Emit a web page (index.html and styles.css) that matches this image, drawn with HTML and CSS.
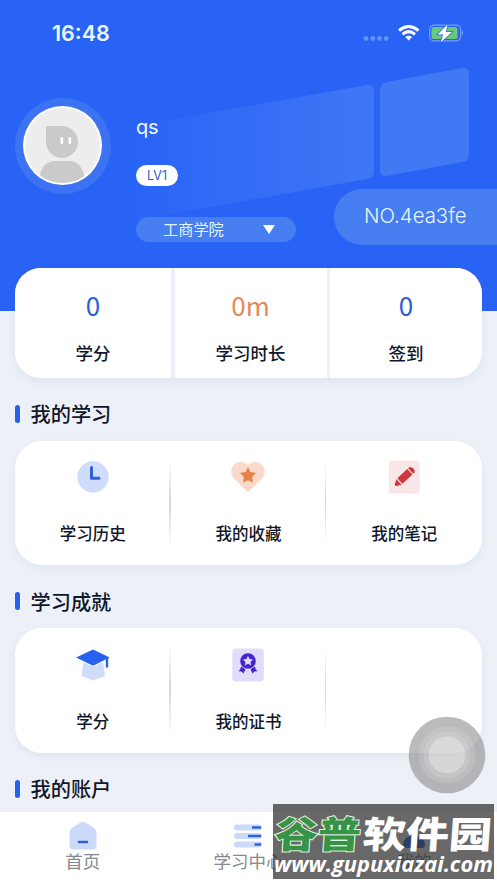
FILE: index.html
```html
<!DOCTYPE html>
<html lang="zh-CN">
<head>
<meta charset="utf-8">
<meta name="viewport" content="width=device-width, initial-scale=1">
<title>我的</title>
<link rel="stylesheet" href="styles.css">
</head>
<body>
<div class="app">
  <header class="hero">
    <svg class="hero-art" viewBox="0 0 497 311" aria-hidden="true">
      <defs>
        <linearGradient id="fade"><stop offset="0" stop-color="#447cf5" stop-opacity="0"/><stop offset="1" stop-color="#447cf5" stop-opacity=".8"/></linearGradient>
      </defs>
      <path fill="url(#fade)" d="M126 128 L367 85 Q374 84 374 91 V171 Q374 178 367 179 L126 222Z"/>
      <path fill="#447cf5" opacity=".88" d="M387 82 L462 68 Q469 67 469 74 V154 Q469 161 462 162 L387 176 Q380 177 380 170 V90 Q380 83 387 82Z"/>
    </svg>
    <div class="status">
      <span class="time">16:48</span>
      <svg class="status-icons" viewBox="0 0 104 24" aria-hidden="true">
        <g fill="#6790fa"><circle cx="6" cy="17.500" r="2.400"/><circle cx="12.800" cy="17.500" r="2.400"/><circle cx="19.500" cy="17.500" r="2.400"/><circle cx="26.200" cy="17.500" r="2.400"/></g>
        <g fill="none" stroke="#fff" stroke-width="3"><path d="M39 9.500Q48.700 1.500 58.500 9.500"/><path d="M42.500 13.300Q48.700 8 55 13.300"/></g>
        <path fill="#fff" d="M45.300 16Q48.700 13.400 52.100 16L48.700 19.400Z"/>
        <rect x="69.700" y="4.200" width="31" height="15.600" rx="4.500" fill="none" stroke="#7ca0fa" stroke-width="1.200"/>
        <rect x="71.500" y="6" width="26" height="12" rx="2.500" fill="#65cb78"/>
        <path d="M102 9.500v5q2-2.500 0-5" fill="#7ca0fa"/>
        <path d="M87.500 3.500L77.500 13.600h5.600L80.800 21.200 92 11h-6Z" fill="#fff" stroke="#2a63f4" stroke-width="1.500" paint-order="stroke"/>
      </svg>
    </div>
    <div class="profile">
      <div class="avatar">
        <svg viewBox="0 0 80 80" aria-hidden="true">
          <defs><clipPath id="face"><circle cx="39.500" cy="39.500" r="37.500"/></clipPath></defs>
          <circle cx="39.500" cy="39.500" r="39.500" fill="#fff"/><circle cx="39.500" cy="39.500" r="37.500" fill="#ededed"/>
          <g clip-path="url(#face)" fill="#cacaca"><path d="M23 20H39A16 16 0 1 1 23 36Z"/><path d="M17 80V69Q20 55 32 55H48Q58 56 61 69V80Z"/></g>
          <g fill="#fff"><rect x="37.500" y="31" width="2.600" height="7" rx="1"/><rect x="45.500" y="31" width="2.600" height="7" rx="1"/></g>
        </svg>
      </div>
      <div class="identity">
        <div class="name">qs</div>
        <span class="level">LV1</span>
        <div class="school"><span>工商学院</span><svg viewBox="0 0 12 9"><path d="M0 0H12L6 9Z" fill="#fff"/></svg></div>
      </div>
    </div>
    <div class="member">NO.4ea3fe</div>
  </header>

  <main>
    <section class="stats">
      <div class="stat"><b>0</b><span>学分</span></div>
      <div class="stat"><b class="orange">0m</b><span>学习时长</span></div>
      <div class="stat"><b>0</b><span>签到</span></div>
    </section>

    <h2>我的学习</h2>
    <section class="card">
      <div class="item">
        <svg viewBox="0 0 36 36"><circle cx="18" cy="18" r="15.700" fill="#cfdcfa"/><path d="M16.500 8.500V19.200H24" fill="none" stroke="#2c5fdc" stroke-width="3" stroke-linecap="round" stroke-linejoin="round"/></svg>
        <span>学习历史</span>
      </div>
      <div class="item">
        <svg viewBox="0 0 36 36"><path d="M18 33.500L3.500 19C-3.500 10 7-3 18 6C29-3 39.500 10 32.500 19Z" fill="#f9dac8"/><path d="M18 8.200L20.500 13L26 14L22.200 18L22.900 23.500L18 21.200L13.100 23.500L13.800 18L10 14L15.500 13Z" fill="#e6834b"/></svg>
        <span>我的收藏</span>
      </div>
      <div class="item">
        <svg viewBox="0 0 36 36"><rect x="2.700" y="1.500" width="31" height="33" rx="3.500" fill="#f9e6e6"/><g transform="translate(18.300 18) rotate(47)" fill="#cf373d"><path d="M-3.800-8.800V-9.800Q-3.500-12.300 0-12.300Q3.500-12.300 3.800-9.800V-8.800Z"/><path d="M-3.800-7.600H3.800V6H-3.800Z"/><path d="M-3.800 7.200H3.800L1.200 12Q0 13.500-1.200 12Z"/></g></svg>
        <span>我的笔记</span>
      </div>
    </section>

    <h2>学习成就</h2>
    <section class="card">
      <div class="item">
        <svg viewBox="0 0 36 36"><path d="M8.300 15.500H28L30 29L18 33.500L6.500 29Z" fill="#cfdcfa"/><path d="M18 2.500L34.700 10.500L18 18.700L1 10.500Z" fill="#2861ee" stroke="#fff" stroke-width="2" paint-order="stroke"/><path d="M32 11V20.500" stroke="#2861ee" stroke-width="2.400"/></svg>
        <span>学分</span>
      </div>
      <div class="item">
        <svg viewBox="0 0 36 36"><rect x="2.300" y="1.500" width="31.500" height="33" rx="3.500" fill="#e1dcfc"/><path d="M11 19.500L15.500 22.300L13.500 26.500L11.500 24.500L8.500 24.300L10.200 22.500ZM25 19.500L20.500 22.300L22.500 26.500L24.500 24.500L27.500 24.300L25.800 22.500Z" fill="#4325cb"/><circle cx="18" cy="14" r="7.800" fill="#4325cb"/><path d="M18 8.800L19.500 12L23 12.400L20.500 14.900L21.200 18.400L18 16.700L14.800 18.400L15.500 14.900L13 12.400L16.500 12Z" fill="#e1dcfc"/></svg>
        <span>我的证书</span>
      </div>
      <div class="item"></div>
    </section>

    <h2>我的账户</h2>
  </main>

  <nav class="tabs">
    <div class="tab"><svg viewBox="0 0 32 28"><path d="M13 .8Q16-1 19 .8L27 6Q29.500 8 29.500 10V23.500Q29.500 27.500 26 27.500H6Q2.500 27.500 2.500 23.500V10Q2.500 8 5 6Z" fill="#ccdafa"/><path d="M12 20H20" stroke="#2f62d2" stroke-width="2.500" stroke-linecap="round"/></svg><span>首页</span></div>
    <div class="tab"><svg viewBox="0 0 32 28"><path d="M5 5.500H27M5 14H27M5 22.500H27" stroke="#ccdafa" stroke-width="6" stroke-linecap="round"/><path d="M20 5.500H29M16 14H29M22.500 22.500H29" stroke="#2e62dc" stroke-width="2.400"/></svg><span>学习中心</span></div>
    <div class="tab"><svg viewBox="0 0 32 28"><circle cx="16" cy="8" r="7" fill="#ccdafa"/><path d="M5 23Q5 14 16 14T27 23Q27 26 24 26H8Q5 26 5 23Z" fill="#2861ee"/></svg><span>我的</span></div>
  </nav>

  <svg class="assistive" viewBox="0 0 78 78" aria-hidden="true">
    <circle cx="39" cy="39" r="38.300" fill="#777" fill-opacity=".5"/><circle cx="39" cy="39" r="28.500" fill="#fff" fill-opacity=".12"/><circle cx="39" cy="39" r="23.500" fill="#fff" fill-opacity=".12"/><circle cx="39" cy="39" r="18.500" fill="#fff" fill-opacity=".3"/>
  </svg>
  <div class="watermark">
    <svg viewBox="0 0 221 75">
      <g class="brand" font-size="37" transform="translate(3 0) skewX(-4)"><text class="green" x="1" y="44" textLength="86" lengthAdjust="spacingAndGlyphs">谷普</text><text class="white" x="89" y="44" textLength="129" lengthAdjust="spacingAndGlyphs">软件园</text></g>
      <text class="url" x="1" y="68" textLength="219" lengthAdjust="spacingAndGlyphs">www.gupuxiazai.com</text>
    </svg>
  </div>
</div>
</body>
</html>
```
FILE: styles.css
```css
* { box-sizing: border-box; }
body {
  margin: 0;
  background: #edf0f7;
  color: #11172a;
  font-family: Inter, "Noto Sans CJK SC", sans-serif;
}
.app {
  position: relative;
  width: 497px;
  height: 883px;
  overflow: hidden;
  display: flex;
  flex-direction: column;
}
.hero {
  position: relative;
  flex: none;
  height: 311px;
  background: #2963f6;
  color: #fff;
}
.hero-art { position: absolute; inset: 0; width: 497px; height: 311px; }
.status {
  position: relative;
  height: 66px;
  padding: 0 33px 0 52px;
  display: flex;
  justify-content: space-between;
  align-items: center;
}
.time { font-size: 21.5px; font-weight: 600; line-height: 26px; color: #e9f6ff; }
.status-icons { width: 104px; height: 24px; }
.profile { position: relative; display: flex; padding: 32px 0 0 15px; gap: 25px; }
.avatar {
  flex: none;
  width: 96px;
  height: 96px;
  padding: 8px;
  border-radius: 50%;
  background: #3b73f3;
}
.avatar svg { display: block; width: 80px; height: 80px; }
.identity { display: flex; flex-direction: column; align-items: flex-start; padding-top: 17px; }
.name { font-size: 20px; line-height: 25px; letter-spacing: -.2px; color: #eff8ff; }
.level {
  width: 42px;
  height: 21px;
  margin-top: 25px;
  border-radius: 11px;
  background: #fff;
  color: #2c5fc8;
  font-size: 12.5px;
  line-height: 21.5px;
  text-align: center;
}
.school {
  display: flex;
  align-items: center;
  justify-content: space-between;
  width: 160px;
  height: 25px;
  margin-top: 31px;
  padding: 0 21px 0 27px;
  border-radius: 13px;
  background: #467df0;
  color: #e5f5ff;
  font: 15.2px/22px "Noto Sans CJK SC", sans-serif;
}
.school span { padding-bottom: 3px; }
.school svg { width: 12px; height: 9px; }
.member {
  position: absolute;
  right: 0;
  top: 189px;
  width: 163px;
  height: 56px;
  padding-left: 30px;
  border-radius: 28px 0 0 28px;
  background: #467df0;
  color: #e5f5ff;
  font-size: 20.4px;
  font-weight: 300;
  line-height: 54px;
}
main { position: relative; flex: none; margin-top: -43px; padding: 0 15px; }
.stats { display: grid; grid-template-columns: 156px 152px 152px; gap: 3.5px; height: 110px; border-radius: 26px; background: #edf0f6; box-shadow: 0 3px 9px rgba(60, 85, 150, .09); overflow: hidden; }
.stat { display: flex; flex-direction: column; align-items: center; padding-top: 20px; background: #fff; }
.stat b { color: #2d60d2; font: 400 26px/34px "Noto Sans CJK SC", sans-serif; }
.stat .orange { color: #e58a56; }
.stat span { margin-top: 18px; font-family: "Noto Sans CJK SC", sans-serif; font-size: 17.5px; font-weight: 500; line-height: 26px; }
h2 {
  display: flex;
  align-items: center;
  height: 30px;
  margin: 20.7px 0 12.3px;
  font: 500 20.2px/29px "Noto Sans CJK SC", sans-serif;
}
h2::before { content: ""; width: 5px; height: 18px; margin-right: 10.5px; border-radius: 3px; background: #2861ea; }
.card { display: grid; grid-template-columns: repeat(3, 1fr); height: 124.5px; border-radius: 27px; background: #fff; box-shadow: 0 3px 9px rgba(60, 85, 150, .07); }
.item {
  position: relative;
  display: flex;
  flex-direction: column;
  align-items: center;
  padding-top: 18.5px;
  font: 500 16.5px/25px "Noto Sans CJK SC", sans-serif;
}
.item svg { width: 36px; height: 36px; margin-bottom: 26px; }
.item + .item::before { content: ""; position: absolute; left: -1.5px; top: 18px; width: 1.5px; height: 88px; background: linear-gradient(transparent, #d1d3e3 50%, transparent); }
.tabs { position: absolute; bottom: 0; left: 0; display: grid; grid-template-columns: repeat(3, 1fr); width: 100%; height: 71px; background: #fff; }
.tab { display: flex; flex-direction: column; align-items: center; padding-top: 10px; color: #858991; font: 17.5px/22px "Noto Sans CJK SC", sans-serif; }
.tab svg { flex: none; width: 32px; height: 28px; }
.assistive { position: absolute; left: 408px; top: 715.5px; width: 78px; height: 78px; }
.watermark { position: absolute; left: 273px; top: 804px; width: 221px; height: 75px; background: rgba(46, 46, 46, .72); }
.watermark svg { display: block; width: 100%; height: 100%; }
.brand { font-family: "Noto Sans CJK SC", sans-serif; font-weight: 900; }
.green { fill: #379447; stroke: #e2f2df; stroke-width: 2px; paint-order: stroke; }
.white, .url { fill: #fff; }
.url { font: italic 700 21px "Open Sans", sans-serif; }
```
